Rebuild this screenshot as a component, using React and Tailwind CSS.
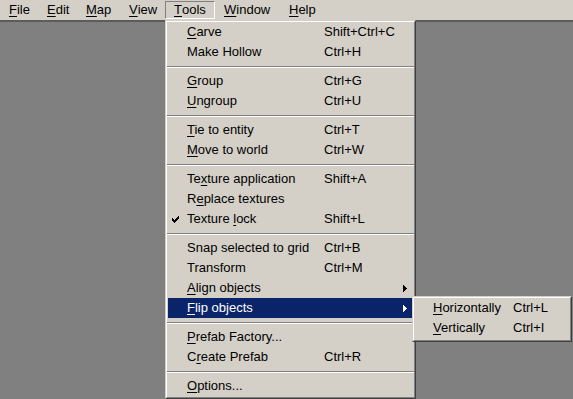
import React from "react";

const U = (text, idx) => {
  if (idx < 0) return text;
  return (
    <>
      {text.slice(0, idx)}
      <span className="underline underline-offset-[2px] decoration-1">{text[idx]}</span>
      {text.slice(idx + 1)}
    </>
  );
};

const Check = () => (
  <svg width="7" height="7" viewBox="0 0 7 7" shapeRendering="crispEdges" className="ml-[4px]">
    <path d="M6 0h1v1h-1zM5 1h2v1h-2zM0 2h1v1h-1zM4 2h3v1h-3zM0 3h2v1h-2zM3 3h3v1h-3zM0 4h5v1h-5zM1 5h3v1h-3zM2 6h1v1h-1z" fill="#000" />
  </svg>
);

const Arrow = ({ white }) => (
  <svg width="4" height="7" viewBox="0 0 4 7" shapeRendering="crispEdges" className="absolute right-[6px] top-[7px]">
    <path d="M0 0h1v7h-1zM1 1h1v5h-1zM2 2h1v3h-1zM3 3h1v1h-1z" fill={white ? "#fff" : "#000"} />
  </svg>
);

const Row = ({ label, u = -1, sc, check, arrow, hl }) => (
  <div
    className={
      hl
        ? "relative flex h-[20px] items-center bg-[#0a246a] text-white"
        : "relative flex h-[20px] items-center text-black"
    }
  >
    <span className="flex w-[19px] items-center">{check ? <Check /> : null}</span>
    <span className="w-[137px] whitespace-nowrap">{U(label, u)}</span>
    <span className="whitespace-nowrap">{sc}</span>
    {arrow ? <Arrow white={hl} /> : null}
  </div>
);

const Sep = () => (
  <div className="-mx-[1px] h-[9px] pt-[4px]">
    <div className="h-[1px] bg-[#808080]" />
    <div className="h-[1px] bg-white" />
  </div>
);

const MenuItem = ({ w, label, pressed }) => (
  <div
    className={
      pressed
        ? "h-[18px] mt-[1px] flex items-center pl-[8px] border border-t-[#808080] border-l-[#808080] border-b-white border-r-white"
        : "h-[18px] mt-[1px] flex items-center pl-[8px] border border-transparent"
    }
    style={{ width: w }}
  >
    {label}
  </div>
);

export default function App() {
  return (
    <div className="relative w-[573px] h-[399px] overflow-hidden bg-[#808080] font-['Liberation_Sans',Arial,sans-serif] text-[13px] leading-[20px] text-black">
      <div className="flex h-[20px] bg-[#d4d0c8]">
        <MenuItem w={38} label={U("File", 0)} />
        <MenuItem w={39} label={U("Edit", 0)} />
        <MenuItem w={43} label={U("Map", 0)} />
        <MenuItem w={45} label={U("View", 0)} />
        <MenuItem w={50} label={U("Tools", 0)} pressed />
        <MenuItem w={65} label={U("Window", 0)} />
        <MenuItem w={40} label={U("Help", 0)} />
      </div>
      <div className="h-[2px] bg-[#5c5c5c]" />

      <div className="absolute left-[165px] top-[20px] w-[251px] h-[379px] bg-[#d4d0c8] border border-t-[#d4d0c8] border-l-[#d4d0c8] border-r-[#404040] border-b-[#404040]">
        <div className="h-full border border-t-white border-l-white border-r-[#808080] border-b-[#808080] pl-[1px] pr-[1px]">
          <Row label="Carve" u={0} sc="Shift+Ctrl+C" />
          <Row label="Make Hollow" sc="Ctrl+H" />
          <Sep />
          <Row label="Group" u={0} sc="Ctrl+G" />
          <Row label="Ungroup" u={0} sc="Ctrl+U" />
          <Sep />
          <Row label="Tie to entity" u={0} sc="Ctrl+T" />
          <Row label="Move to world" u={0} sc="Ctrl+W" />
          <Sep />
          <Row label="Texture application" u={2} sc="Shift+A" />
          <Row label="Replace textures" u={1} />
          <Row label="Texture lock" u={8} sc="Shift+L" check />
          <Sep />
          <Row label="Snap selected to grid" sc="Ctrl+B" />
          <Row label="Transform" sc="Ctrl+M" />
          <Row label="Align objects" u={0} arrow />
          <Row label="Flip objects" u={0} arrow hl />
          <Sep />
          <Row label="Prefab Factory..." u={0} />
          <Row label="Create Prefab" u={1} sc="Ctrl+R" />
          <Sep />
          <Row label="Options..." u={0} />
        </div>
      </div>

      <div className="absolute left-[412px] top-[296px] w-[160px] h-[46px] bg-[#d4d0c8] border border-t-[#d4d0c8] border-l-[#d4d0c8] border-r-[#404040] border-b-[#404040]">
        <div className="h-full border border-t-white border-l-white border-r-[#808080] border-b-[#808080] pl-[1px] pr-[1px]">
          <div className="flex h-[20px] items-center">
            <span className="w-[98px] pl-[18px] whitespace-nowrap">{U("Horizontally", 0)}</span>
            <span className="whitespace-nowrap">Ctrl+L</span>
          </div>
          <div className="flex h-[20px] items-center">
            <span className="w-[98px] pl-[18px] whitespace-nowrap">{U("Vertically", 0)}</span>
            <span className="whitespace-nowrap">Ctrl+I</span>
          </div>
        </div>
      </div>
    </div>
  );
}
